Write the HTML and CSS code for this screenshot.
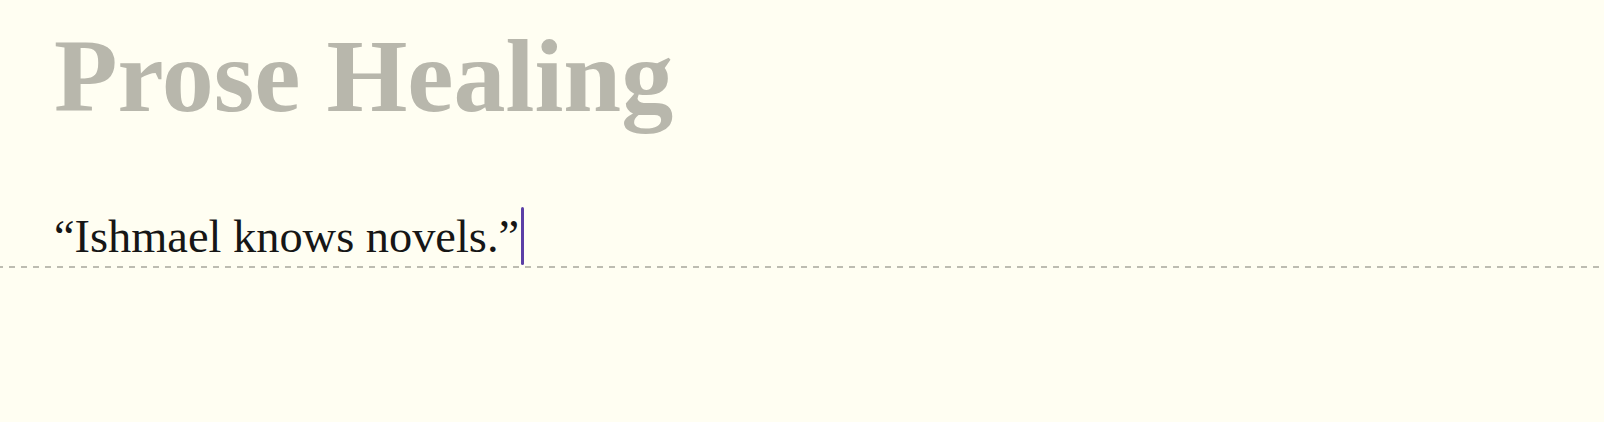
FILE: index.html
```html
<!DOCTYPE html>
<html lang="en">
<head>
<meta charset="utf-8">
<title>Prose Healing</title>
<link rel="stylesheet" href="styles.css">
</head>
<body>
<main class="page">
  <h1 class="title">Prose Healing</h1>
  <div class="editor-line">
    <p class="line-text">“Ishmael knows novels.”<span class="caret"></span></p>
  </div>
</main>
</body>
</html>
```
FILE: styles.css
```css
html, body {
  margin: 0;
  padding: 0;
  background: #fffef2;
}
body {
  width: 1604px;
  height: 422px;
  overflow: hidden;
  font-family: "Liberation Serif", "Times New Roman", serif;
}
.page {
  padding-top: 24px;
}
.title {
  margin: 0 0 80px 0;
  padding-left: 54px;
  font-size: 104px;
  line-height: 104px;
  font-weight: 700;
  color: #b8b7ac;
}
.editor-line {
  height: 58px;
  padding-left: 54px;
  background-image: repeating-linear-gradient(to right, #bdbcb1 0 3px, transparent 3px 9px, #bdbcb1 9px 12px);
  background-size: 100% 2px;
  background-repeat: no-repeat;
  background-position: 0 58px;
  padding-bottom: 2px;
}
.line-text {
  margin: 0;
  font-size: 46.4px;
  line-height: 58px;
  color: #161616;
  white-space: nowrap;
}
.caret {
  display: inline-block;
  width: 3px;
  height: 58px;
  margin-left: 2px;
  margin-top: -1px;
  vertical-align: top;
  background: #5b3fa6;
  border-radius: 2px;
}
```
